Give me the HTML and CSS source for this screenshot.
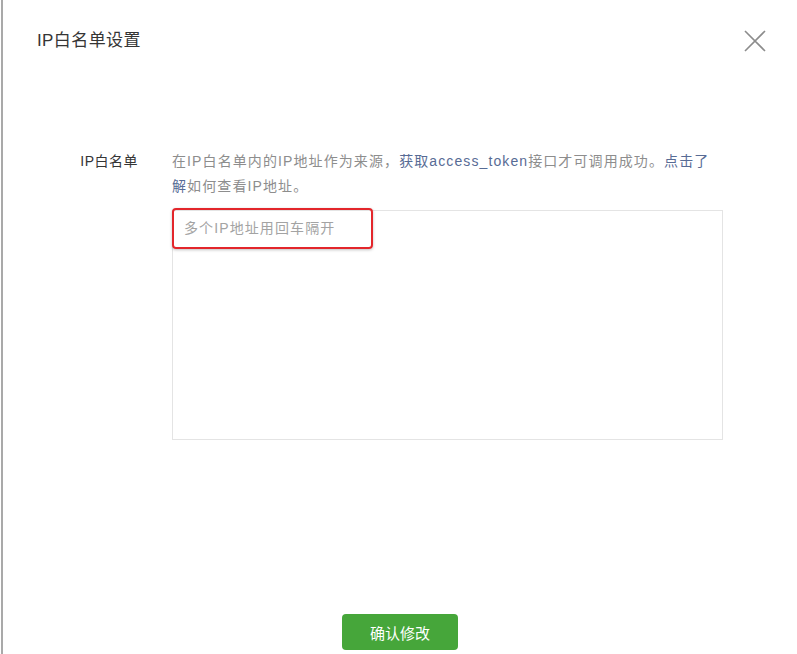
FILE: index.html
```html
<!DOCTYPE html>
<html lang="zh-CN">
<head>
<meta charset="utf-8">
<title>IP白名单设置</title>
<link rel="stylesheet" href="styles.css">
</head>
<body>
<div class="dialog">
  <div class="dialog-header">
    <h3 class="dialog-title">IP白名单设置</h3>
    <button class="close-btn" type="button" aria-label="关闭">
      <svg width="22" height="22" viewBox="0 0 22 22"><path d="M1 1L21 21M21 1L1 21" stroke="#8c8c8c" stroke-width="1.6" fill="none"/></svg>
    </button>
  </div>
  <div class="form-row">
    <label class="form-label">IP白名单</label>
    <div class="form-field">
      <p class="desc">在IP白名单内的IP地址作为来源，<a class="link">获取access_token</a>接口才可调用成功。<a class="link">点击了解</a>如何查看IP地址。</p>
      <div class="input-wrap">
        <textarea class="ip-input" placeholder="多个IP地址用回车隔开"></textarea>
        <span class="highlight"></span>
      </div>
    </div>
  </div>
  <div class="dialog-footer">
    <button class="btn-primary" type="button">确认修改</button>
  </div>
</div>
</body>
</html>
```
FILE: styles.css
```css
html, body {
  margin: 0;
  padding: 0;
  background: #ffffff;
}
body {
  font-family: "Liberation Sans", "Noto Sans CJK SC", sans-serif;
  color: #353535;
}
.dialog {
  box-sizing: border-box;
  height: 654px;
  margin-left: 1px;
  border-left: 2px solid #a9a9a9;
  display: flex;
  flex-direction: column;
}
.dialog-header {
  display: flex;
  justify-content: space-between;
  align-items: center;
  padding: 28px 31px 0 34px;
}
.dialog-title {
  margin: 0;
  font-size: 17px;
  font-weight: normal;
  line-height: 26px;
  letter-spacing: 0.4px;
  color: #353535;
}
.close-btn {
  border: 0;
  background: none;
  padding: 0;
  width: 22px;
  height: 22px;
  display: flex;
}
.form-row {
  display: grid;
  grid-template-columns: 135px 551px;
  column-gap: 34px;
  margin-top: 95px;
}
.form-label {
  text-align: right;
  font-size: 14px;
  line-height: 25px;
  letter-spacing: 0.5px;
  color: #353535;
}
.desc {
  margin: 0;
  padding-right: 12px;
  font-size: 14px;
  line-height: 25px;
  letter-spacing: 1.1px;
  color: #8d8d8d;
}
.link {
  color: #576b95;
  text-decoration: none;
}
.input-wrap {
  position: relative;
  margin-top: 11px;
}
.ip-input {
  display: block;
  box-sizing: border-box;
  width: 551px;
  height: 230px;
  margin: 0;
  padding: 7px 11px;
  border: 1px solid #e4e4e4;
  border-radius: 0;
  resize: none;
  outline: none;
  font-family: "Liberation Sans", "Noto Sans CJK SC", sans-serif;
  font-size: 14px;
  line-height: 20px;
  letter-spacing: 1.1px;
  color: #353535;
}
.ip-input::placeholder {
  color: #a3a3a3;
}
.highlight {
  position: absolute;
  left: 0;
  top: -2px;
  width: 201px;
  height: 41px;
  box-sizing: border-box;
  border: 2px solid #e3262b;
  border-radius: 4px;
  box-shadow: 0 1px 3px rgba(0, 0, 0, 0.25);
  pointer-events: none;
}
.dialog-footer {
  margin-top: auto;
  padding-bottom: 4px;
  display: flex;
  justify-content: center;
}
.btn-primary {
  width: 116px;
  height: 36px;
  border: 0;
  border-radius: 4px;
  background: #46a63a;
  color: #ffffff;
  font-family: "Liberation Sans", "Noto Sans CJK SC", sans-serif;
  font-size: 15px;
  cursor: pointer;
}
```
